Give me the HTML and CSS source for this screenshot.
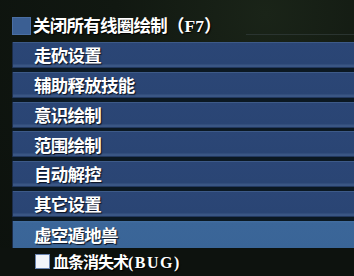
FILE: index.html
```html
<!DOCTYPE html>
<html lang="zh-CN">
<head>
<meta charset="utf-8">
<link rel="stylesheet" href="styles.css">
</head>
<body>
<div class="panel">
  <div class="header">
    <span class="box"></span>
    <span class="label">关闭所有线圈绘制<span class="latin">（F7）</span></span>
    <span class="frame-top"></span>
  </div>
  <div class="menu">
    <div class="bar">走砍设置</div>
    <div class="bar">辅助释放技能</div>
    <div class="bar">意识绘制</div>
    <div class="bar">范围绘制</div>
    <div class="bar">自动解控</div>
    <div class="bar">其它设置</div>
    <div class="bar active">虚空遁地兽</div>
  </div>
  <div class="sub">
    <span class="wbox"></span>
    <span class="sublabel">血条消失术<span class="latin2">(BUG)</span></span>
  </div>
</div>
</body>
</html>
```
FILE: styles.css
```css
html, body {
  margin: 0;
  padding: 0;
}
body {
  width: 354px;
  height: 276px;
  overflow: hidden;
  background: radial-gradient(ellipse at 75% 5%, #1a2418 0%, #111811 40%, #0c110d 100%);
  font-family: "Noto Sans CJK SC", "Liberation Serif", sans-serif;
  color: #ffffff;
}
.panel {
  display: flex;
  flex-direction: column;
  padding-top: 10px;
}
.header {
  position: relative;
  display: flex;
  align-items: center;
  height: 31px;
  padding-left: 12px;
  gap: 2px;
}
.box {
  width: 19px;
  height: 18px;
  background: #3b5f93;
  box-shadow: inset 0 0 0 1px #4a6ea2;
}
.label {
  font-size: 17.5px;
  letter-spacing: -0.75px;
  font-weight: 700;
  line-height: 1;
  text-shadow: 1px 1px 1px #000;
}
.latin {
  font-family: "Liberation Serif", "Noto Sans CJK SC", serif;
  letter-spacing: 0;
}
.frame-top {
  position: absolute;
  left: 246px;
  right: 0;
  bottom: 6px;
  height: 1px;
  background: #2a3430;
}
.menu {
  display: flex;
  flex-direction: column;
  gap: 3.8px;
  margin-left: 12px;
  margin-top: 1px;
  background: #0b1822;
}
.bar {
  height: 26px;
  display: flex;
  align-items: center;
  padding-left: 21px;
  font-size: 17.5px;
  letter-spacing: -0.75px;
  font-weight: 700;
  line-height: 1;
  text-shadow: 1px 1px 1px #0a1020;
  background: linear-gradient(to bottom,
    #3d5a88 0px, #3d5a88 1px,
    #2b4676 1px, #2a4574 22px,
    #3a5684 23px, #3a5684 25px,
    #22385e 25px, #22385e 26px);
  border-left: 1px solid #1b2c48;
}
.bar.active {
  height: 27px;
  background: linear-gradient(to bottom, #4470a2 0px, #3b6699 2px, #3a6597 100%);
}
.sub {
  display: flex;
  align-items: center;
  height: 28px;
  padding-left: 35px;
  gap: 3px;
  background: #0d120e;
}
.wbox {
  width: 13px;
  height: 13px;
  background: #f2f5fa;
  border: 1px solid #6b85b0;
}
.sublabel {
  font-size: 16px;
  letter-spacing: -1px;
  font-weight: 700;
  line-height: 1;
  text-shadow: 1px 1px 1px #000;
}
.latin2 {
  font-family: "Liberation Serif", "Noto Sans CJK SC", serif;
  font-size: 16px;
  letter-spacing: 1.5px;
}
```
